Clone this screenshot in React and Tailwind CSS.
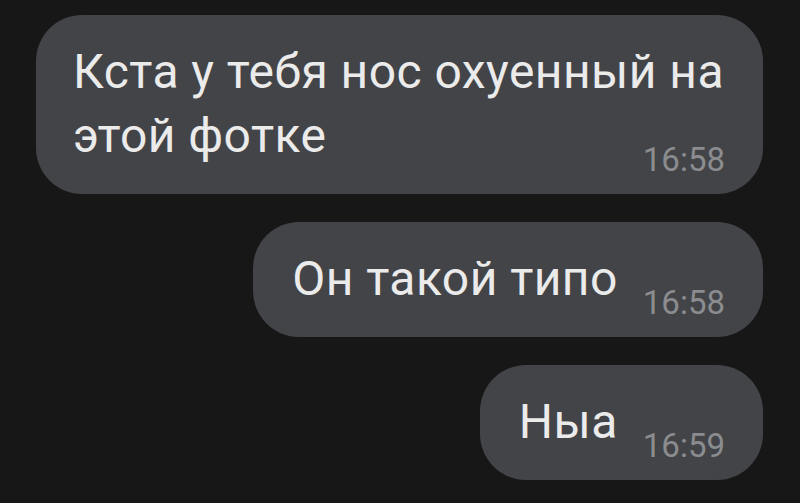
import React from 'react';

const Time = ({ children }) => (
    <span className="inline-block ml-[25px] text-[33px] leading-none tracking-normal text-[#8b8c8f] relative top-[19px]">
        {children}
    </span>
);

const Bubble = ({ children, className = '' }) => (
    <div className={`bg-[#434447] rounded-[46px] pr-[38px] pt-[25px] pb-[26px] ${className}`}>
        <div className="text-[48px] leading-[64px] tracking-[0.45px] text-[#ebebeb] whitespace-nowrap">{children}</div>
    </div>
);

const App = () => {
    return (
        <div
            className="min-h-screen bg-[#171718] flex flex-col items-end gap-[28px] pt-[15px] pr-[37px]"
            style={{ fontFamily: 'Roboto, "Noto Sans", sans-serif' }}
        >
            <Bubble className="w-[727px] rounded-[40px] pl-[37px]">
                Кста у тебя нос охуенный на
                <br />
                этой фотке
                <span className="float-right text-[33px] leading-[64px] tracking-normal text-[#8b8c8f] relative top-[24px]">16:58</span>
            </Bubble>
            <Bubble className="pl-[39px]">
                Он такой типо
                <Time>16:58</Time>
            </Bubble>
            <Bubble className="pl-[39px]">
                Ныа
                <Time>16:59</Time>
            </Bubble>
        </div>
    );
};

export default App;
